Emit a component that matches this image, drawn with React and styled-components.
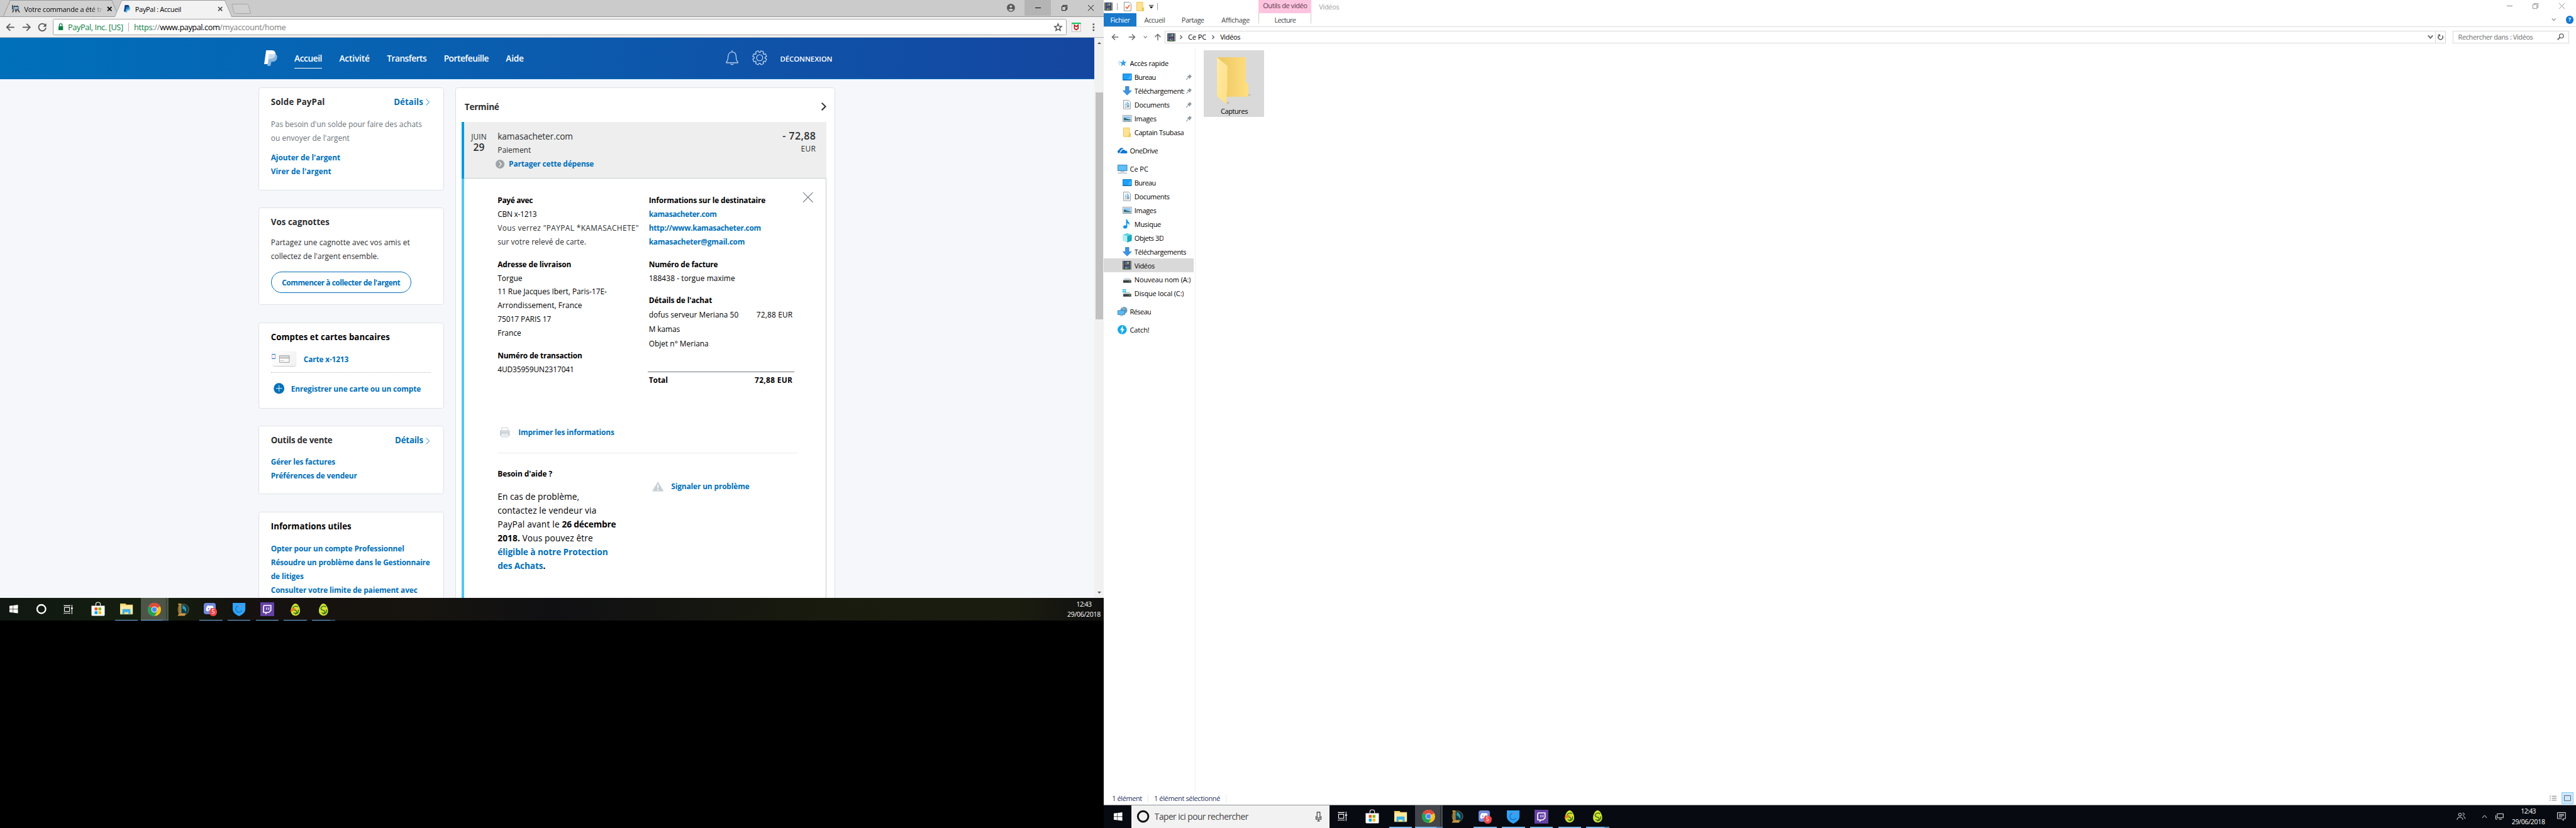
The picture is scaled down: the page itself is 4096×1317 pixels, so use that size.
import React from "react";
import styled, { createGlobalStyle, css } from "styled-components";
import { FaWindows, FaDiscord } from "react-icons/fa";

const FAMILY = '"Open Sans", "Noto Sans", sans-serif';
const SCALE = 4096 / 4480;

/* Letter spacing that brings a run of text to a given width. */
const pen = document.createElement("canvas").getContext("2d");
const tracking = (text, size, weight, width) => {
  if (!width || typeof text !== "string") return "normal";
  pen.font = `${weight} ${size}px ${FAMILY}`;
  return `${((width - pen.measureText(text).width) / text.length).toFixed(3)}px`;
};

const Global = createGlobalStyle`
  html, body { margin: 0; background: #000; overflow: hidden; }
  *, *::before, *::after { box-sizing: border-box; }
  svg { display: block; flex: none; overflow: visible; }
`;

const Desktop = styled.div`
  display: flex;
  width: 4480px;
  height: 1440px;
  zoom: ${SCALE};
  background: #000;
  font-family: ${FAMILY};
  overflow: hidden;
`;

const Text = styled.span`
  flex: none;
  white-space: pre;
  font-size: ${(p) => p.$size || 13}px;
  font-weight: ${(p) => p.$weight || 400};
  color: ${(p) => p.$color || "inherit"};
  letter-spacing: ${(p) => tracking(p.children, p.$size || 13, p.$weight || 400, p.$w)};
`;

const Line = styled(Text)`
  display: block;
  height: ${(p) => p.$h || 24}px;
  line-height: ${(p) => p.$h || 24}px;
  margin-top: ${(p) => p.$mt || 0}px;
`;

const Strong = styled(Line).attrs({ $weight: 700 })``;
const LinkLine = styled(Line).attrs({ $weight: 700, $color: "#0070ba" })``;

/* ------------------------------------------------ left monitor ---------- */

const LeftScreen = styled.div`
  flex: none;
  width: 1920px;
  height: 1080px;
  display: flex;
  flex-direction: column;
`;

const TabStrip = styled.div`
  flex: none;
  display: flex;
  height: 29px;
  padding-left: 6px;
  background: #cbcbcb;
  box-shadow: inset 0 -1px 0 #999;
`;

const Tab = styled.div`
  position: relative;
  display: flex;
  align-items: center;
  width: ${(p) => p.$width}px;
  height: 29px;
  margin-left: ${(p) => p.$overlap || 0}px;
  padding: 2px 12px 0 ${(p) => p.$pad}px;
  z-index: ${(p) => (p.$active ? 2 : 1)};
  &::before,
  &::after {
    content: "";
    position: absolute;
    z-index: -1;
    top: 0;
    bottom: ${(p) => (p.$active ? 0 : 1)}px;
    background: ${(p) => (p.$active ? "#f2f2f2" : "#d0d0d0")};
    border-top: 1px solid #999;
  }
  &::before {
    left: 0;
    right: 40%;
    border-left: 2px solid #999;
    transform: skewX(-23deg);
    transform-origin: bottom left;
  }
  &::after {
    right: 0;
    left: 40%;
    border-right: 2px solid #999;
    transform: skewX(23deg);
    transform-origin: bottom right;
  }
`;

const TabTitle = styled(Text)`
  width: ${(p) => p.$box}px;
  margin-left: ${(p) => p.$gap}px;
  overflow: hidden;
  ${(p) => p.$fade && css`mask-image: linear-gradient(90deg, #000 84%, transparent);`}
`;

const NewTab = styled.div`
  width: 29px;
  height: 17px;
  margin: 7px 0 0 1px;
  border: 2px solid #a6a6a6;
  border-radius: 3px;
  background: #d0d0d0;
  transform: skewX(16deg);
`;

const StripEnd = styled.div`
  margin-left: auto;
  display: flex;
  align-items: flex-start;
`;

const WinButton = styled.div`
  display: flex;
  align-items: center;
  justify-content: center;
  width: ${(p) => p.$width || 46}px;
  height: 27px;
  background: ${(p) => (p.$hover ? "#b4b4b4" : "transparent")};
`;

const Toolbar = styled.div`
  flex: none;
  display: flex;
  align-items: center;
  height: 37px;
  padding-left: 10px;
  background: #f2f2f2;
  border-bottom: 1px solid #b3b3b3;
`;

const NavIcons = styled.div`
  display: flex;
  gap: 12px;
  width: 82px;
`;

const UrlBox = styled.div`
  display: flex;
  align-items: center;
  width: 1763px;
  height: 29px;
  padding: 0 7px 0 9px;
  background: #fff;
  border: 1px solid #a5a5a5;
  border-radius: 3px;
`;

const UrlRule = styled.div`
  width: 1px;
  height: 16px;
  margin: 0 9px;
  background: #b5b5b5;
`;

const Spacer = styled.div`
  flex: 1;
`;

const Gap = styled.div`
  flex: none;
  width: ${(p) => p.$width}px;
`;

const ToolbarEnd = styled.div`
  display: flex;
  align-items: center;
  gap: 20px;
  margin-left: 9px;
`;

const Viewport = styled.div`
  flex: none;
  display: flex;
  height: 974px;
  overflow: hidden;
`;

const Page = styled.div`
  width: 1903px;
  height: 974px;
  overflow: hidden;
  background: #f5f7fb;
  color: #2c2e2f;
`;

const Scrollbar = styled.div`
  width: 17px;
  display: flex;
  flex-direction: column;
  align-items: center;
  background: #f1f1f1;
`;

const ScrollThumb = styled.div`
  width: 13px;
  height: 394px;
  margin: 85px 0 auto;
  background: #c1c1c1;
`;

const Arrow = styled.div`
  width: 0;
  height: 0;
  margin: ${(p) => (p.$up ? "7px 0 0" : "0 0 8px")};
  border: 4px solid transparent;
  border-${(p) => (p.$up ? "bottom" : "top")}-color: #505050;
  border-${(p) => (p.$up ? "top" : "bottom")}-width: 0;
`;

const Header = styled.div`
  display: flex;
  align-items: flex-start;
  height: 72px;
  padding: 22px 0 0 459px;
  background: linear-gradient(98deg, #0070ba 0%, #0b5bae 50%, #1546a0 100%);
  border-bottom: 1px solid #0a6dc0;
  color: #fff;
`;

const NavItem = styled(Text)`
  height: 31px;
  line-height: 28px;
  margin-left: ${(p) => p.$ml || 30}px;
  border-bottom: ${(p) => (p.$active ? "1px solid #fff" : "none")};
`;

const HeaderTools = styled.div`
  display: flex;
  align-items: flex-start;
  margin-left: 351px;
`;

const LogOut = styled(Text)`
  line-height: 30px;
  margin-left: 23px;
`;

const Columns = styled.div`
  display: flex;
  align-items: flex-start;
  gap: 20px;
  padding: 14px 0 0 450px;
`;

const SideColumn = styled.div`
  display: flex;
  flex-direction: column;
  gap: 30px;
  width: 322px;
`;

const Card = styled.div`
  height: ${(p) => p.$height}px;
  padding: ${(p) => p.$pt || 13}px 20px 0;
  background: #fff;
  border: 1px solid #dfe1e5;
  border-radius: 5px;
`;

const CardHead = styled.div`
  display: flex;
  align-items: center;
  justify-content: space-between;
  height: 24px;
  line-height: 24px;
  padding-right: 3px;
`;

const Details = styled.div`
  display: flex;
  align-items: center;
  gap: 5px;
  color: #0070ba;
`;

const PillButton = styled.div`
  display: flex;
  align-items: center;
  justify-content: center;
  width: 244px;
  height: 37px;
  margin-top: 15px;
  border: 1px solid #0070ba;
  border-radius: 19px;
  color: #0070ba;
`;

const BankRow = styled.div`
  display: flex;
  align-items: center;
  height: ${(p) => p.$h}px;
  margin-top: ${(p) => p.$mt}px;
  padding-left: ${(p) => p.$pl}px;
  gap: ${(p) => p.$gap}px;
  color: #0070ba;
`;

const MissingGlyph = styled.div`
  position: relative;
  z-index: 1;
  flex: none;
  width: 7px;
  height: 9px;
  margin-bottom: 8px;
  border: 1px solid #0070ba;
  border-left-color: #e0a0c0;
  border-right-color: #a0a0e0;
`;

const CardThumb = styled.div`
  display: flex;
  align-items: center;
  justify-content: center;
  width: 41px;
  height: 25px;
  margin: 0 13px 0 -5px;
  background: linear-gradient(120deg, #fff, #f1f1f1);
  border-radius: 4px;
  box-shadow: 0 1px 1px #c8c8c8;
`;

const DottedRule = styled.div`
  width: 278px;
  margin-top: 11px;
  border-top: 1px dotted #b4b4b4;
`;

const MainCard = styled.div`
  width: 660px;
  height: 900px;
  padding: 0 14px 0 10px;
  background: #fff;
  border: 1px solid #dfe1e5;
  border-radius: 5px;
`;

const MainHead = styled.div`
  display: flex;
  align-items: center;
  justify-content: space-between;
  height: 59px;
  padding: 5px 0 0 5px;
`;

const TxHead = styled.div`
  display: flex;
  height: 99px;
  padding-right: 18px;
  background: #eee;
  border-left: 4.4px solid #009cde;
  box-shadow: inset 0 -1px 0 #c7cdd1;
`;

const TxDate = styled.div`
  display: flex;
  flex-direction: column;
  align-items: center;
  width: 27px;
  margin: 17px 19px 0 12px;
`;

const TxInfo = styled.div`
  flex: 1;
  padding-top: 13px;
`;

const Share = styled.div`
  display: flex;
  align-items: center;
  gap: 8px;
  height: 24px;
  margin-left: -4px;
`;

const TxAmount = styled.div`
  display: flex;
  flex-direction: column;
  align-items: flex-end;
  padding-top: 13px;
`;

const TxBody = styled.div`
  height: 780px;
  padding: 26px 0 0 58px;
  border-left: 4.4px solid #54c5f8;
  border-right: 1px solid #c7cdd1;
  color: #000;
`;

const Split = styled.div`
  display: flex;
  align-items: flex-start;
  height: ${(p) => p.$height}px;
`;

const LeftCell = styled.div`
  flex: none;
  width: 261px;
`;

const RightCell = styled.div`
  flex: none;
  width: 255px;
`;

const Inset = styled.div`
  padding-left: 2px;
`;

const PriceRow = styled.div`
  display: flex;
  justify-content: space-between;
  padding: 0 3px 0 2px;
  ${(p) => p.$total && css`
    margin-top: 37px;
    padding-top: 2px;
    border-top: 1px solid #6f767a;
  `}
`;

const CloseSlot = styled.div`
  margin: -2px 0 0 15px;
`;

const IconLink = styled.div`
  display: flex;
  align-items: center;
  gap: ${(p) => p.$gap}px;
  height: 24px;
  margin-top: ${(p) => p.$mt || 0}px;
  padding-left: ${(p) => p.$pl || 0}px;
`;

const Rule = styled.div`
  width: 522px;
  height: 1px;
  margin: 24px 0;
  background: #e9ebec;
`;

const Run = styled.div`
  display: flex;
  height: 24px;
  line-height: 24px;
`;

/* ------------------------------------------------ icons ----------------- */

const PayPalMark = ({ width, height, back, front }) => (
  <svg width={width} height={height} viewBox="0 0 23 27">
    <path d="M3.5 0H13c5 0 7.6 3 6.700 7.500C18.700 13 15 15 10.500 15H8l-1.500 9H0z" fill={back} />
    <path d="M8.500 6.500H19.500c3 1.200 3.800 4 3 7C21.500 18 18.500 20 15 20h-2.500L11 27H5.500z" fill={front} opacity="0.75" />
  </svg>
);

const Chevron = ({ w = 7, h = 12, color = "#0070ba", sw = 1 }) => (
  <svg width={w} height={h} viewBox="0 0 7 12" preserveAspectRatio="none">
    <path d="M.6.6 6.300 6 .6 11.400" fill="none" stroke={color} strokeWidth={sw} vectorEffect="non-scaling-stroke" />
  </svg>
);

const Cross = ({ size, color, sw }) => (
  <svg width={size} height={size} viewBox="0 0 10 10">
    <path d="M0 0 10 10M10 0 0 10" stroke={color} strokeWidth={sw} vectorEffect="non-scaling-stroke" />
  </svg>
);

const Restore = ({ color }) => (
  <svg width="10" height="10" viewBox="0 0 10 10" fill="none" stroke={color}>
    <path d="M.5 2.500h7v7h-7zM2.500 2.500v-2h7v7h-2" />
  </svg>
);

const BackArrow = ({ color = "#5a5a5a", flip, sw = 2, size = 16 }) => (
  <svg width={size} height={size} viewBox="0 0 16 16" fill="none" stroke={color} strokeWidth={sw}>
    <path d="M15 8H2M8 2 2 8l6 6" transform={flip ? `rotate(${flip} 8 8)` : undefined} />
  </svg>
);

const Reload = () => (
  <svg width="16" height="16" viewBox="0 0 16 16">
    <path d="M13 4.200A6.300 6.300 0 1 0 14.200 9" fill="none" stroke="#5a5a5a" strokeWidth="2" />
    <path d="M15 1v6H9z" fill="#5a5a5a" />
  </svg>
);

const Lock = () => (
  <svg width="8" height="12" viewBox="0 0 8 12">
    <path d="M0 5h8v7H0z" fill="#0b8043" />
    <path d="M1.700 5V3a2.300 2.300 0 0 1 4.600 0v2" fill="none" stroke="#0b8043" strokeWidth="1.400" />
  </svg>
);

const Bell = () => (
  <svg width="22" height="26" viewBox="0 0 22 26" fill="none" stroke="#d3e2f5" strokeWidth="1.200">
    <path d="M11 0v3M1 20.500c2.500-2.500 3-4 3-9C4 6 7 3 11 3s7 3 7 8.500c0 5 .5 6.500 3 9v1.200H1zM8.500 23.500a2.600 2 0 0 0 5 0" />
  </svg>
);

const gearPath = (() => {
  const steps = [];
  for (let i = 0; i < 8; i += 1) {
    [[-0.2, 12.300], [0.2, 12.300], [0.3, 9.400], [0.485, 9.400]].forEach(([d, r]) => {
      const a = (i * Math.PI) / 4 + Math.PI / 8 + d;
      steps.push(`${(13 + Math.sin(a) * r).toFixed(2)} ${(13 - Math.cos(a) * r).toFixed(2)}`);
    });
  }
  return `M${steps.join("L")}Z`;
})();

const Gear = () => (
  <svg width="26" height="26" viewBox="0 0 26 26" fill="none" stroke="#d3e2f5" strokeWidth="1.200" strokeLinejoin="round">
    <path d={gearPath} />
    <circle cx="13" cy="13" r="5.300" />
  </svg>
);

const CreditCard = () => (
  <svg width="18" height="13" viewBox="0 0 18 13" fill="none" stroke="#9a9a9a">
    <path d="M.5.5h17v12H.5zM0 3h18M0 5h18" />
    <path d="M2 9.500h6" strokeDasharray="1.500 1" />
  </svg>
);

const PlusDisc = () => (
  <svg width="19" height="20" viewBox="0 0 19 20">
    <circle cx="9.500" cy="10.500" r="9.200" fill="#b9c6d2" />
    <circle cx="9.500" cy="9.500" r="9.200" fill="#0070ba" />
    <path d="M9.500 4v11M4 9.500h11" stroke="#fff" />
  </svg>
);

const ShareDisc = () => (
  <svg width="15.500" height="15.500" viewBox="0 0 16 16">
    <circle cx="8" cy="8" r="8" fill="#9da3a6" />
    <path d="M6.300 3.500 10.500 8l-4.200 4.500" fill="none" stroke="#fff" strokeWidth="1.200" />
  </svg>
);

const Printer = () => (
  <svg width="17" height="17" viewBox="0 0 17 17">
    <path d="M3 .5h11V6H3z" fill="#fff" stroke="#c7cfd4" />
    <path d="M0 5h17v9.500h-2.500V10h-12v4.500H0z" fill="#c7cfd4" />
    <path d="M3 10h11v6.500H3zM5 12h7M5 14.200h7" fill="none" stroke="#c7cfd4" />
    <path d="M1.500 7.500h14" stroke="#fff" strokeWidth=".6" />
  </svg>
);

const Warning = () => (
  <svg width="20" height="17" viewBox="0 0 20 17">
    <path d="M10 0 20 17H0z" fill="#c7cfd4" />
    <path d="M10 5v6.500M10 13.200v2" stroke="#fff" strokeWidth="2" />
  </svg>
);

const Film = ({ s = 15 }) => (
  <svg width={s} height={s} viewBox="0 0 15 15">
    <path d="M0 0h15v15H0z" fill="#3c3c40" />
    <path d="M1.500 1v14M13.500 1v14" stroke="#e2e2e2" strokeWidth="1.200" strokeDasharray="1.200 1" />
    <path d="M3.500 1h8v6h-8z" fill="#3767b8" />
    <path d="M3.500 8.500h8V14h-8z" fill="#2e5cae" />
    <path d="M8 2h3v2H8zM5 11h2v2H5z" fill="#f2c230" />
    <path d="M4 5h4v1.500H4zM8 9.500h3V11H8z" fill="#d84a3a" />
    <path d="M7 4.500h4V6H7zM4 12.500h7V14H4z" fill="#4f9e3f" />
  </svg>
);

const CheckDoc = () => (
  <svg width="13" height="16" viewBox="0 0 13 16">
    <path d="M.5.500h9l3 3v12H.5z" fill="#fff" stroke="#868686" />
    <path d="m3 8.500 2.500 3 4.500-6" fill="none" stroke="#f0642a" strokeWidth="1.800" />
  </svg>
);

const SmallFolder = () => (
  <svg width="13" height="16" viewBox="0 0 13 16">
    <path d="M.5.500H11V9l1.500 1.500v5H.5z" fill="#ffe394" stroke="#e9c04e" />
    <path d="M10 10.500h2.500v5H10z" fill="#f8d067" stroke="#e2b53d" strokeWidth=".7" />
  </svg>
);

const Monitor = () => (
  <svg width="16" height="12" viewBox="0 0 16 12">
    <path d="M.5.500h15v11H.5z" fill="#1ba1fb" stroke="#1170b4" />
    <path d="M8 11 15 1v10z" fill="#43b4ff" />
    <path d="M1 11h14" stroke="#0b62a5" />
  </svg>
);

const DownArrow = () => (
  <svg width="16" height="16" viewBox="0 0 16 16">
    <path d="M5 .5h6V8h4.500L8 15.500.5 8H5z" fill="#3a94e4" stroke="#2a76c2" strokeWidth=".8" />
  </svg>
);

const DocIcon = () => (
  <svg width="13" height="16" viewBox="0 0 13 16">
    <path d="M.5.500h9l3 3v12H.5z" fill="#fff" stroke="#8a8f94" />
    <path d="M3 5.500h2M6 4h3M6 6h4M2.500 8h8" stroke="#2f96d8" />
    <path d="M2.500 10.500h3M2.500 12.500h8" stroke="#8a9aa8" />
    <path d="M6.500 9.500h4v2h-4z" fill="#4d7f8e" />
  </svg>
);

const ImageIcon = () => (
  <svg width="16" height="12" viewBox="0 0 16 12">
    <path d="M.5.500h15v11H.5z" fill="#fff" stroke="#8a8f94" />
    <path d="M2 2h12v4H2z" fill="#8fc4f2" />
    <path d="M2 5c4 0 5 2.500 12 2v3H2z" fill="#2d6672" />
    <path d="M2 8.500h12V10H2z" fill="#6fa5c9" />
  </svg>
);

const StarIcon = () => (
  <svg width="15" height="14" viewBox="0 0 16 14">
    <path d="m9.500 0 1.500 4.600 4.800.2-3.800 3 1.400 4.800-4-2.700L5.200 13l1.500-4.800L3 5h4.700z" fill="#2f9be6" />
    <path d="M1 4h3M0 7h3M1.500 10H4" stroke="#56b4f0" />
  </svg>
);

const Cloud = () => (
  <svg width="17" height="11" viewBox="0 0 17 11">
    <path d="M0 8c0-2 1.500-3 2.800-3C3.200 1.500 8 .2 10.500 3 7 3 5 5 5 7.500c-1.500.5-1.700 2-1 3C1.500 11 0 9.800 0 8z" fill="#0f72c6" />
    <path d="M5 11c-1-1.500 0-3 1.500-3C6.500 4.500 11 3 13 6c2.500-.3 4 1.200 4 3 0 1.200-.8 2-2 2z" fill="#1079d8" />
  </svg>
);

const Computer = () => (
  <svg width="17" height="15" viewBox="0 0 17 15">
    <path d="M.5.500h16v10H.5z" fill="#5fbdf8" stroke="#2a7cb5" />
    <path d="M5 12h7M.5 14.500h16" stroke="#8697a3" />
  </svg>
);

const Note = () => (
  <svg width="12" height="16" viewBox="0 0 12 16">
    <ellipse cx="3.500" cy="13" rx="3.500" ry="2.800" fill="#1296ec" />
    <path d="M5 0h2c0 4 5 4.500 4 10.500C10.500 8 9 7 7 6.500V13H5z" fill="#1296ec" />
  </svg>
);

const Cube = () => (
  <svg width="16" height="16" viewBox="0 0 16 16">
    <path d="M8 0 16 2.500 8 5 0 2.500z" fill="#58d5e0" />
    <path d="M0 2.500 8 5v11l-8-3z" fill="#b4eef0" />
    <path d="m16 2.500-8 2.500v11l8-3z" fill="#19a8bf" />
  </svg>
);

const Drive = ({ win }) => (
  <svg width="16" height="15" viewBox="0 0 16 15">
    <path d="M3 6h10l2 4H1z" fill="#cfd3d6" />
    <path d="M1 9.500h14V14H1z" fill="#3d4144" />
    <path d="M11 11.500h2" stroke="#3fd34a" strokeWidth="1.500" />
    {win && <path d="M0 1h2.500v2.500H0zM3.300 1h2.500v2.500H3.300zM0 4.300h2.500v2.500H0zM3.300 4.300h2.500v2.500H3.300z" fill="#19b5ee" />}
  </svg>
);

const NetworkIcon = () => (
  <svg width="17" height="16" viewBox="0 0 17 16">
    <circle cx="11" cy="6" r="6" fill="#6a9db9" />
    <path d="M8 1.500c3 1 4 4 3 7" stroke="#cfe5ef" fill="none" />
    <path d="M.5 6.500h12v7H.5z" fill="#5cbcf8" stroke="#2a7cb5" />
    <path d="M4 15.500h6" stroke="#8697a3" />
  </svg>
);

const CatchIcon = () => (
  <svg width="16" height="16" viewBox="0 0 16 16">
    <circle cx="8" cy="8" r="8" fill="#16aaea" />
    <path d="M9 1 4.500 9h3L6.500 15 12 7H9z" fill="#fff" />
  </svg>
);

const Pin = () => (
  <svg width="10" height="10" viewBox="0 0 10 10">
    <path d="M6 0 10 4 8.500 4.500 7 6.500 6.800 8.500 1.500 3.500 3.800 3.200 5.500 1.500z" fill="#8996a0" />
    <path d="M3.500 6.500.3 9.700" stroke="#8996a0" strokeWidth="1.200" />
  </svg>
);

const BigFolder = () => (
  <svg width="60" height="83" viewBox="0 0 60 83">
    <defs>
      <linearGradient id="fback" x1="0" x2="1">
        <stop offset="0" stopColor="#ebc55f" />
        <stop offset="1" stopColor="#ffdf80" />
      </linearGradient>
      <linearGradient id="ffront" x1="0" x2="1" y1="0" y2="1">
        <stop offset="0" stopColor="#ffe9a6" />
        <stop offset="1" stopColor="#fddf85" />
      </linearGradient>
    </defs>
    <path d="m17 82 6-3-6-2zM54 68l6-3-6-1z" fill="#bdbdbd" />
    <path d="M0 0h50v43l4.500 4v22H0z" fill="url(#fback)" />
    <path d="m0 0 18 15v43l-1 3v21L0 68z" fill="url(#ffront)" />
  </svg>
);

const TaskView = () => (
  <svg width="16" height="16" viewBox="0 0 16 16" fill="none" stroke="#fff" strokeWidth="1.200">
    <path d="M.5 4.500h9v7h-9zM0 .5v1h10v-1M0 15.500v-1h10v1M13.500 0v4M13.500 8v8" />
    <path d="M12 4.500h3v3h-3z" fill="#fff" stroke="none" />
  </svg>
);

const Ring = ({ s, sw, color }) => (
  <svg width={s} height={s} viewBox="0 0 20 20">
    <circle cx="10" cy="10" r="8.700" fill="none" stroke={color} strokeWidth={sw} />
  </svg>
);

const Store = () => (
  <svg width="24" height="24" viewBox="0 0 24 24">
    <path d="M8 6V3.500a4 3.500 0 0 1 8 0V6" fill="none" stroke="#fff" strokeWidth="1.200" />
    <path d="M.5 6h23v16a1.500 1.500 0 0 1-1.500 1.500H2A1.500 1.500 0 0 1 .5 22z" fill="#fff" />
    <path d="M6 9h5v5H6z" fill="#f25022" />
    <path d="M12.500 9h5v5h-5z" fill="#7fba00" />
    <path d="M6 15.500h5v5H6z" fill="#00a4ef" />
    <path d="M12.500 15.500h5v5h-5z" fill="#ffb900" />
  </svg>
);

const ExplorerIcon = () => (
  <svg width="22" height="19" viewBox="0 0 22 19">
    <path d="M0 0h9l2 2h11v17H0z" fill="#fbd56b" />
    <path d="M0 3.500h22V17H0z" fill="#ffe9a0" />
    <path d="M4 19v-8a1.500 1.500 0 0 1 1.500-1.500h11A1.500 1.500 0 0 1 18 11v8h-3.500v-4h-7v4z" fill="#3db4e8" />
  </svg>
);

const ChromeIcon = () => (
  <svg width="23" height="23" viewBox="0 0 24 24">
    <circle cx="12" cy="12" r="12" fill="#fbc116" />
    <path d="M12 12 1.600 6A12 12 0 0 1 22.400 6z" fill="#de4b3d" />
    <path d="M1.600 6A12 12 0 0 0 12 24l5-9-5-3z" fill="#1fa15d" />
    <path d="M12 6.500h10.700a12 12 0 0 0-.3-.5H12z" fill="#de4b3d" />
    <circle cx="12" cy="12" r="5.500" fill="#f4f4f4" />
    <circle cx="12" cy="12" r="4.300" fill="#4a8af4" />
  </svg>
);

const LeagueIcon = () => (
  <svg width="21" height="23" viewBox="0 0 21 23">
    <circle cx="11.500" cy="11.500" r="9.500" fill="#0c3a4d" stroke="#8d7238" />
    <path d="M10 4c5 1 8 6 6 12-2-4-3-5-6-6z" fill="#2f9aa8" />
    <path d="M2 1h6v17h8l-2 4.500H1.500L3.500 19.500V3.500z" fill="#c89a43" />
    <path d="M5 3h1.300v16.500H5z" fill="#7a5620" />
  </svg>
);

const DiscordBox = styled.div`
  position: relative;
  display: flex;
  align-items: center;
  justify-content: center;
  width: 20px;
  height: 20px;
  margin: -2px 0 0 -4px;
  border-radius: 4px;
  background: #7289da;
`;

const Badge = styled.div`
  position: absolute;
  left: 9px;
  top: 9px;
  width: 14px;
  height: 14px;
  border-radius: 50%;
  background: #f04747;
  color: #fff;
  font-size: 10px;
  line-height: 14px;
  text-align: center;
`;

const ShieldIcon = () => (
  <svg width="22" height="24" viewBox="0 0 22 24">
    <path d="M0 1h22V12c0 6-6 10-11 12C6 22 0 18 0 12z" fill="#2ea3f7" />
    <path d="M15 8a5.600 5.600 0 1 0 1 6" fill="none" stroke="#1b6fbd" strokeWidth="1.400" />
    <path d="M15 8a5.600 5.600 0 0 0-5.500-1.500" fill="none" stroke="#e68aa0" strokeWidth="1.200" />
  </svg>
);

const TwitchIcon = () => (
  <svg width="24" height="24" viewBox="0 0 24 24">
    <path d="M0 0h24v24H0z" fill="#6441a4" />
    <path d="M6.300 5.500h12V14l-3.500 3.500h-3L9.500 19.500v-2H5.500V8z" fill="none" stroke="#fff" strokeWidth="1.800" />
    <path d="M11 9v4M14.700 9v4" stroke="#fff" strokeWidth="1.400" />
  </svg>
);

const EggIcon = ({ beak }) => (
  <svg width={beak ? 17 : 16} height="21" viewBox="0 0 16 21">
    <path d="M8 0c4 0 8 7 8 12.500S12 21 8 21s-8-3-8-8.500S4 0 8 0z" fill="#d2e335" />
    <path d="M12.500 6C9 3.500 3.500 5 3.700 9c.2 3.500 7 2 7 5.500 0 3-4.500 3.200-6 1M13 10.500c1.500 4-1 8-6 7.800" fill="none" stroke="#3f7212" strokeWidth="1.700" />
    {beak && <path d="M-1 14c1-6 5-7.500 10-5-2 2-4 5-10 5z" fill="#f07a1c" />}
  </svg>
);

/* ------------------------------------------------ taskbar --------------- */

const TaskbarBox = styled.div`
  flex: none;
  display: flex;
  align-items: stretch;
  height: 40px;
  background: ${(p) => p.$bg};
  border-top: ${(p) => (p.$line ? "1px solid #8f9193" : "none")};
  color: #fff;
`;

const TaskButton = styled.div`
  position: relative;
  flex: none;
  display: flex;
  align-items: center;
  justify-content: center;
  width: ${(p) => p.$width || 48}px;
  margin-right: ${(p) => p.$gap || 0}px;
  background: ${(p) => (p.$focus ? "linear-gradient(90deg, rgba(255,255,255,.24) 44px, rgba(255,255,255,.1) 44px, rgba(255,255,255,.1) 45px, rgba(255,255,255,.24) 45px)" : "none")};
  &::after {
    content: "";
    display: ${(p) => (p.$running ? "block" : "none")};
    position: absolute;
    bottom: 0;
    left: ${(p) => (p.$focus ? 0 : 4)}px;
    right: ${(p) => (p.$focus ? 0 : 4)}px;
    height: 2px;
    background: ${(p) => (p.$stack ? "linear-gradient(90deg, #76b9ed 78%, #4f81a8 78%)" : "#76b9ed")};
  }
`;

const AppRow = styled.div`
  display: flex;
  margin-left: ${(p) => p.$ml}px;
`;

const Clock = styled.div`
  display: flex;
  flex-direction: column;
  align-items: center;
  justify-content: center;
  width: 58px;
  margin-right: ${(p) => p.$mr}px;
`;

const DiscordIcon = () => (
  <DiscordBox>
    <FaDiscord size={15} color="#fff" />
    <Badge>5</Badge>
  </DiscordBox>
);

const APPS = [
  { id: "store", icon: <Store /> },
  { id: "explorer", icon: <ExplorerIcon />, running: true },
  { id: "chrome", icon: <ChromeIcon />, running: true, focus: true, stack: true },
  { id: "league", icon: <LeagueIcon /> },
  { id: "discord", icon: <DiscordIcon />, running: true },
  { id: "shield", icon: <ShieldIcon />, running: true },
  { id: "twitch", icon: <TwitchIcon />, running: true },
  { id: "egg1", icon: <EggIcon beak />, running: true },
  { id: "egg2", icon: <EggIcon />, running: true, stack: true },
];

const Apps = ({ ml }) => (
  <AppRow $ml={ml}>
    {APPS.map((a) => (
      <TaskButton key={a.id} $gap={1} $running={a.running} $focus={a.focus} $stack={a.stack}>
        {a.icon}
      </TaskButton>
    ))}
  </AppRow>
);

const ClockText = ({ mr }) => (
  <Clock $mr={mr}>
    <Line $size={11.5} $w={26} $h={18}>12:43</Line>
    <Line $size={11.5} $w={58} $h={18}>29/06/2018</Line>
  </Clock>
);

/* ------------------------------------------------ right monitor --------- */

const RightScreen = styled.div`
  width: 2560px;
  height: 1440px;
  display: flex;
  flex-direction: column;
  background: #fff;
  color: #000;
`;

const TitleBar = styled.div`
  flex: none;
  display: flex;
  height: 23px;
  padding-left: 1px;
`;

const QuickAccess = styled.div`
  display: flex;
  align-items: center;
  width: 268px;
  height: 23px;
`;

const QuickSlot = styled.div`
  margin-left: ${(p) => p.$ml || 0}px;
`;

const QuickRule = styled.div`
  width: 1px;
  height: 12px;
  margin-left: ${(p) => p.$ml}px;
  background: #9a9a9a;
`;

const ContextTab = styled.div`
  display: flex;
  justify-content: center;
  width: 92px;
  height: 23px;
  background: #fdc4df;
  line-height: 20px;
`;

const WindowTitle = styled(Text)`
  margin-left: 13px;
  line-height: 24px;
`;

const Caption = styled.div`
  display: flex;
  margin: 5px 20px 0 auto;
  gap: 35px;
`;

const MinMark = styled.div`
  width: 10px;
  height: 1px;
  margin-top: ${(p) => p.$mt || 0}px;
  background: ${(p) => p.$color};
`;

const RibbonTabs = styled.div`
  flex: none;
  display: flex;
  height: 24px;
  border-bottom: 1px solid #dadbdc;
  line-height: 23px;
  color: #444;
`;

const RibbonTab = styled.div`
  display: flex;
  justify-content: center;
  width: ${(p) => p.$width}px;
  background: ${(p) => (p.$file ? "#1979ca" : "none")};
  color: ${(p) => (p.$file ? "#fff" : "#444")};
  ${(p) => p.$context && css`
    border: solid transparent;
    border-width: 0 1px;
    border-image: linear-gradient(#ccc 60%, #e6e6e6 80%, transparent 82%) 1;
  `}
`;

const RibbonEnd = styled.div`
  display: flex;
  align-items: center;
  gap: 17px;
  margin: 0 4px 0 auto;
`;

const HelpDisc = styled.div`
  width: 14px;
  height: 14px;
  border-radius: 50%;
  background: #0f78d4;
  color: #fff;
  font-size: 10px;
  font-weight: 700;
  line-height: 14px;
  text-align: center;
`;

const AddressRow = styled.div`
  flex: none;
  display: flex;
  align-items: center;
  height: 35px;
  padding: 0 12px 0 13px;
`;

const AddressNav = styled.div`
  flex: none;
  display: flex;
  align-items: center;
  width: 93px;
`;

const AddressBox = styled.div`
  flex: none;
  display: flex;
  align-items: center;
  width: 2228px;
  height: 22px;
  padding-left: 3px;
  border: 1px solid #d9d9d9;
`;

const Crumb = styled(Text)`
  margin: 0 10px;
`;

const RefreshCell = styled.div`
  display: flex;
  align-items: center;
  justify-content: center;
  width: 18px;
  height: 20px;
  margin-left: 3px;
  border-left: 1px solid #d9d9d9;
`;

const SearchBox = styled.div`
  display: flex;
  align-items: center;
  justify-content: space-between;
  width: 202px;
  height: 22px;
  margin-left: 12px;
  padding: 0 8px;
  border: 1px solid #d9d9d9;
  color: #6d6d6d;
`;

const ExplorerBody = styled.div`
  flex: 1;
  display: flex;
  min-height: 0;
`;

const NavPane = styled.div`
  width: 159px;
  padding-top: 16px;
  border-right: 1px solid #f0f0f0;
`;

const NavRow = styled.div`
  display: flex;
  align-items: center;
  width: 156px;
  height: 24px;
  margin-top: ${(p) => (p.$section ? 8 : 0)}px;
  padding-left: ${(p) => (p.$child ? 31 : 23)}px;
  background: ${(p) => (p.$selected ? "#d9d9d9" : "none")};
`;

const NavIcon = styled.div`
  flex: none;
  display: flex;
  align-items: center;
  justify-content: center;
  width: 18px;
  margin-right: 4px;
`;

const NavLabel = styled(Text)`
  max-width: ${(p) => (p.$clip ? 87 : 110)}px;
  overflow: hidden;
`;

const PinSlot = styled.div`
  margin: 0 3px 0 auto;
`;

const FolderTile = styled.div`
  display: flex;
  flex-direction: column;
  align-items: center;
  width: 105px;
  height: 116px;
  margin: 6px 0 0 15px;
  padding-top: 12px;
  background: #d9d9d9;
`;

const StatusBar = styled.div`
  flex: none;
  display: flex;
  align-items: center;
  height: 23px;
  padding: 0 4px 0 14px;
  color: #26335f;
`;

const StatusRule = styled.div`
  width: 1px;
  height: 14px;
  margin: 0 10px;
  background: #e8e8e8;
`;

const ViewIcons = styled.div`
  display: flex;
  align-items: center;
  gap: 4px;
  margin-left: auto;
`;

const ViewButton = styled.div`
  display: flex;
  align-items: center;
  justify-content: center;
  width: 21px;
  height: 21px;
  background: ${(p) => (p.$on ? "#cce8ff" : "none")};
  border: 1px solid ${(p) => (p.$on ? "#8ccbf5" : "transparent")};
`;

const TaskSearch = styled.div`
  display: flex;
  align-items: center;
  width: 344px;
  padding: 0 14px 0 9px;
  background: #f2f2f2;
  color: #444;
`;

const SearchHint = styled(Text)`
  margin: 0 auto 0 10px;
`;

const Tray = styled.div`
  display: flex;
  align-items: center;
  gap: 14px;
  margin: 0 18px 0 auto;
`;

const NAV = [
  { icon: <StarIcon />, label: "Accès rapide", w: 67 },
  { icon: <Monitor />, label: "Bureau", w: 37, child: true, pin: true },
  { icon: <DownArrow />, label: "Téléchargements", w: 90, child: true, pin: true },
  { icon: <DocIcon />, label: "Documents", w: 61, child: true, pin: true },
  { icon: <ImageIcon />, label: "Images", w: 38, child: true, pin: true },
  { icon: <SmallFolder />, label: "Captain Tsubasa", w: 86, child: true },
  { icon: <Cloud />, label: "OneDrive", w: 49, section: true },
  { icon: <Computer />, label: "Ce PC", w: 32, section: true },
  { icon: <Monitor />, label: "Bureau", w: 37, child: true },
  { icon: <DocIcon />, label: "Documents", w: 61, child: true },
  { icon: <ImageIcon />, label: "Images", w: 38, child: true },
  { icon: <Note />, label: "Musique", w: 46, child: true },
  { icon: <Cube />, label: "Objets 3D", w: 51, child: true },
  { icon: <DownArrow />, label: "Téléchargements", w: 90, child: true },
  { icon: <Film />, label: "Vidéos", w: 35, child: true, selected: true },
  { icon: <Drive />, label: "Nouveau nom (A:)", w: 98, child: true },
  { icon: <Drive win />, label: "Disque local (C:)", w: 86, child: true },
  { icon: <NetworkIcon />, label: "Réseau", w: 37, section: true },
  { icon: <CatchIcon />, label: "Catch!", w: 34, section: true },
];

/* ------------------------------------------------ composition ----------- */

const Browser = () => (
  <>
    <TabStrip>
      <Tab $width={200} $pad={15}>
        <svg width="14" height="15" viewBox="0 0 14 15">
          <path d="M2 3h10v5H2z" fill="#3d6f9e" />
          <path d="M1 1v8M5 2v4M9 2v4M3 9l-2 5M10 8l3 6M5 10h5M7 9v5" stroke="#222" strokeWidth="1.500" />
          <path d="M3 6h8" stroke="#fff" strokeWidth="1.500" />
        </svg>
        <TabTitle $size={12} $gap={7} $box={138} $fade $w={136}>Votre commande a été tr</TabTitle>
        <Spacer />
        <Cross size={7} color="#111" sw={2} />
      </Tab>
      <Tab $width={205} $overlap={-7} $pad={16} $active>
        <PayPalMark width={11} height={13} back="#123a86" front="#1f9bdd" />
        <TabTitle $size={12} $gap={9} $box={84} $w={80}>PayPal : Accueil</TabTitle>
        <Spacer />
        <Cross size={7} color="#444" sw={1.6} />
        <Gap $width={6} />
      </Tab>
      <NewTab />
      <StripEnd>
        <WinButton $width={48}>
          <svg width="14" height="14" viewBox="0 0 14 14">
            <circle cx="7" cy="7" r="7" fill="#5a5a5a" />
            <circle cx="7" cy="4.700" r="2.100" fill="#cbcbcb" />
            <path d="M2.800 10.500c1-2.500 7.400-2.500 8.400 0-2 2.600-6.400 2.600-8.400 0z" fill="#cbcbcb" />
          </svg>
        </WinButton>
        <WinButton $hover><MinMark $color="#000" /></WinButton>
        <WinButton><Restore color="#000" /></WinButton>
        <WinButton><Cross size={10} color="#000" sw={1} /></WinButton>
      </StripEnd>
    </TabStrip>
    <Toolbar>
      <NavIcons><BackArrow /><BackArrow flip="180" /><Reload /></NavIcons>
      <UrlBox>
        <Lock />
        <Gap $width={8} />
        <Text $size={14} $w={96} $color="#0b8043">PayPal, Inc. [US]</Text>
        <UrlRule />
        <Text $size={14} $w={32} $color="#0b8043">https</Text>
        <Text $size={14} $w={13} $color="#808080">://</Text>
        <Text $size={14} $w={104} $color="#000">www.paypal.com</Text>
        <Text $size={14} $w={115} $color="#808080">/myaccount/home</Text>
        <Spacer />
        <svg width="14" height="14" viewBox="0 0 14 14">
          <path d="m7 1 1.700 4.100 4.500.4-3.400 2.900 1 4.300L7 10.400l-3.800 2.300 1-4.300L.8 5.500l4.500-.4z" fill="none" stroke="#4a4a4a" strokeWidth="1.500" />
        </svg>
      </UrlBox>
      <ToolbarEnd>
        <svg width="16" height="16" viewBox="0 0 16 16">
          <path d="M.5.500h15v15H.5z" fill="#fff" stroke="#b5b5b5" />
          <path d="M0 0h16v2.500H0z" fill="#19c564" />
          <path d="M4.800 4.500v6L8 12.500l3.200-2v-6L8 6.800z" fill="none" stroke="#c01818" strokeWidth="2" />
        </svg>
        <svg width="4" height="14" viewBox="0 0 4 14" fill="#5a5a5a">
          <circle cx="2" cy="2" r="1.600" /><circle cx="2" cy="7" r="1.600" /><circle cx="2" cy="12" r="1.600" />
        </svg>
      </ToolbarEnd>
    </Toolbar>
  </>
);

const DetailsLink = ({ w }) => (
  <Details>
    <Text $size={14.5} $weight={700} $w={w}>Détails</Text>
    <Chevron />
  </Details>
);

const Sidebar = () => (
  <SideColumn>
    <Card $height={179}>
      <CardHead>
        <Text $size={14.5} $weight={700} $w={94}>Solde PayPal</Text>
        <DetailsLink w={51} />
      </CardHead>
      <Line $mt={15} $color="#6c7378" $w={263}>Pas besoin d'un solde pour faire des achats</Line>
      <Line $color="#6c7378" $w={137}>ou envoyer de l'argent</Line>
      <LinkLine $mt={10} $w={121}>Ajouter de l'argent</LinkLine>
      <LinkLine $w={105}>Virer de l'argent</LinkLine>
    </Card>
    <Card $height={170}>
      <Line $size={14.5} $weight={700} $w={102}>Vos cagnottes</Line>
      <Line $mt={11} $w={242}>Partagez une cagnotte avec vos amis et</Line>
      <Line $w={188}>collectez de l'argent ensemble.</Line>
      <PillButton><Text $weight={700} $w={206}>Commencer à collecter de l'argent</Text></PillButton>
    </Card>
    <Card $height={150}>
      <Line $size={14.5} $weight={700} $color="#000" $w={207}>Comptes et cartes bancaires</Line>
      <BankRow $h={26} $mt={12} $pl={1} $gap={0}>
        <MissingGlyph />
        <CardThumb><CreditCard /></CardThumb>
        <Text $weight={700} $w={78}>Carte x-1213</Text>
      </BankRow>
      <DottedRule />
      <BankRow $h={24} $mt={15} $pl={5} $gap={11}>
        <PlusDisc />
        <Text $weight={700} $w={226}>Enregistrer une carte ou un compte</Text>
      </BankRow>
    </Card>
    <Card $height={119} $pt={13}>
      <CardHead>
        <Text $size={14.5} $weight={700} $w={107}>Outils de vente</Text>
        <DetailsLink w={49} />
      </CardHead>
      <LinkLine $mt={13} $w={112}>Gérer les factures</LinkLine>
      <LinkLine $w={150}>Préférences de vendeur</LinkLine>
    </Card>
    <Card $height={200} $pt={13}>
      <Line $size={14.5} $weight={700} $color="#000" $w={140}>Informations utiles</Line>
      <LinkLine $mt={15} $w={232}>Opter pour un compte Professionnel</LinkLine>
      <LinkLine $w={277}>Résoudre un problème dans le Gestionnaire</LinkLine>
      <LinkLine $w={57}>de litiges</LinkLine>
      <LinkLine $w={255}>Consulter votre limite de paiement avec</LinkLine>
    </Card>
  </SideColumn>
);

const Transaction = () => (
  <MainCard>
    <MainHead>
      <Text $size={15} $weight={700} $w={60}>Terminé</Text>
      <Chevron w={8} h={14} color="#2c2e2f" sw={2.2} />
    </MainHead>
    <TxHead>
      <TxDate>
        <Line $size={13} $h={18} $w={27}>JUIN</Line>
        <Line $size={17} $weight={600} $h={18} $w={20}>29</Line>
      </TxDate>
      <TxInfo>
        <Line $size={15} $w={131}>kamasacheter.com</Line>
        <Line $w={58}>Paiement</Line>
        <Share><ShareDisc /><LinkLine $w={148}>Partager cette dépense</LinkLine></Share>
      </TxInfo>
      <TxAmount>
        <Line $size={17.5} $weight={600} $h={22} $w={58}>- 72,88</Line>
        <Line $h={22} $w={26}>EUR</Line>
      </TxAmount>
    </TxHead>
    <TxBody>
      <Split $height={403}>
        <LeftCell>
          <Strong $w={61}>Payé avec</Strong>
          <Line $w={68}>CBN x-1213</Line>
          <Line $color="#2c2e2f" $w={246}>Vous verrez "PAYPAL *KAMASACHETE"</Line>
          <Line $color="#2c2e2f" $w={154}>sur votre relevé de carte.</Line>
          <Strong $mt={15} $w={128}>Adresse de livraison</Strong>
          <Line $w={43}>Torgue</Line>
          <Line $w={190}>11 Rue Jacques Ibert, Paris-17E-</Line>
          <Line $w={147}>Arrondissement, France</Line>
          <Line $w={93}>75017 PARIS 17</Line>
          <Line $w={41}>France</Line>
          <Strong $mt={15} $w={147}>Numéro de transaction</Strong>
          <Line $w={133}>4UD35959UN2317041</Line>
        </LeftCell>
        <RightCell>
          <Inset>
            <Strong $w={203}>Informations sur le destinataire</Strong>
            <LinkLine $w={118}>kamasacheter.com</LinkLine>
            <LinkLine $w={195}>http://www.kamasacheter.com</LinkLine>
            <LinkLine $w={167}>kamasacheter@gmail.com</LinkLine>
            <Strong $mt={15} $w={120}>Numéro de facture</Strong>
            <Line $w={150}>188438 - torgue maxime</Line>
            <Strong $mt={15} $w={110}>Détails de l'achat</Strong>
          </Inset>
          <PriceRow>
            <Line $h={25} $w={156}>dofus serveur Meriana 50</Line>
            <Line $h={25} $w={63}>72,88 EUR</Line>
          </PriceRow>
          <Inset>
            <Line $h={25} $w={54}>M kamas</Line>
            <Line $h={25} $w={104}>Objet n° Meriana</Line>
          </Inset>
          <PriceRow $total>
            <Strong $w={33}>Total</Strong>
            <Strong $w={66}>72,88 EUR</Strong>
          </PriceRow>
        </RightCell>
        <CloseSlot><Cross size={17} color="#5c6266" sw={1.1} /></CloseSlot>
      </Split>
      <IconLink $pl={4} $gap={15}>
        <Printer /><LinkLine $w={167}>Imprimer les informations</LinkLine>
      </IconLink>
      <Rule />
      <Split $height={200}>
        <LeftCell>
          <Strong $w={95}>Besoin d'aide ?</Strong>
          <Line $mt={15} $size={15} $w={142}>En cas de problème,</Line>
          <Line $size={15} $w={172}>contactez le vendeur via</Line>
          <Run>
            <Text $size={15} $w={112}>PayPal avant le </Text>
            <Text $size={15} $weight={700} $w={94}>26 décembre</Text>
          </Run>
          <Run>
            <Text $size={15} $weight={700} $w={39}>2018.</Text>
            <Text $size={15} $w={127}> Vous pouvez être</Text>
          </Run>
          <LinkLine $size={15} $w={192}>éligible à notre Protection</LinkLine>
          <Run>
            <Text $size={15} $weight={700} $color="#0070ba" $w={79}>des Achats</Text>
            <Text $size={15} $weight={700}>.</Text>
          </Run>
        </LeftCell>
        <RightCell>
          <IconLink $mt={21} $pl={8} $gap={13}>
            <Warning /><LinkLine $w={136}>Signaler un problème</LinkLine>
          </IconLink>
        </RightCell>
      </Split>
    </TxBody>
  </MainCard>
);

const PayPalPage = () => (
  <Viewport>
    <Page>
      <Header>
        <PayPalMark width={23} height={27} back="#ffffff" front="#b9d3ec" />
        <NavItem $size={15} $weight={600} $w={48} $active>Accueil</NavItem>
        <NavItem $size={15} $weight={600} $w={53}>Activité</NavItem>
        <NavItem $size={15} $weight={600} $w={69}>Transferts</NavItem>
        <NavItem $size={15} $weight={600} $w={78}>Portefeuille</NavItem>
        <NavItem $size={15} $weight={600} $w={31}>Aide</NavItem>
        <HeaderTools>
          <Bell />
          <Gap $width={24} />
          <Gear />
          <LogOut $size={12.5} $weight={600} $w={91}>DÉCONNEXION</LogOut>
        </HeaderTools>
      </Header>
      <Columns>
        <Sidebar />
        <Transaction />
      </Columns>
    </Page>
    <Scrollbar>
      <Arrow $up />
      <ScrollThumb />
      <Arrow />
    </Scrollbar>
  </Viewport>
);

const DownTick = ({ w = 8, color = "#777", sw = 1.5 }) => (
  <svg width={w} height={w * 0.6} viewBox="0 0 10 6"><path d="m1 .5 4 4.500 4-4.500" fill="none" stroke={color} strokeWidth={sw} /></svg>
);

const Explorer = () => (
  <>
    <TitleBar>
      <QuickAccess>
        <Film s={14} />
        <QuickRule $ml={7} />
        <QuickSlot $ml={12}><CheckDoc /></QuickSlot>
        <QuickSlot $ml={9}><SmallFolder /></QuickSlot>
        <QuickSlot $ml={8}>
          <svg width="8" height="6" viewBox="0 0 8 6"><path d="M0 .5h8" stroke="#111" /><path d="M.5 2.500h7L4 6z" fill="#111" /></svg>
        </QuickSlot>
        <QuickRule $ml={7} />
      </QuickAccess>
      <ContextTab><Text $size={12} $color="#5e3a4b" $w={77}>Outils de vidéo</Text></ContextTab>
      <WindowTitle $size={12} $color="#a0a0a0" $w={35}>Vidéos</WindowTitle>
      <Caption>
        <MinMark $mt={5} $color="#888" />
        <Restore color="#888" />
        <Cross size={10} color="#888" sw={1} />
      </Caption>
    </TitleBar>
    <RibbonTabs>
      <RibbonTab $width={56} $file><Text $size={12} $w={34}>Fichier</Text></RibbonTab>
      <RibbonTab $width={64}><Text $size={12} $w={36}>Accueil</Text></RibbonTab>
      <RibbonTab $width={69}><Text $size={12} $w={39}>Partage</Text></RibbonTab>
      <RibbonTab $width={80}><Text $size={12} $w={49}>Affichage</Text></RibbonTab>
      <RibbonTab $width={92} $context><Text $size={12} $w={37}>Lecture</Text></RibbonTab>
      <RibbonEnd><DownTick color="#888" /><HelpDisc>?</HelpDisc></RibbonEnd>
    </RibbonTabs>
    <AddressRow>
      <AddressNav>
        <BackArrow color="#6d6d6d" sw={2} size={13} />
        <QuickSlot $ml={16}><BackArrow color="#6d6d6d" flip="180" sw={2} size={13} /></QuickSlot>
        <QuickSlot $ml={13}><DownTick w={7} sw={2} color="#8a8a8a" /></QuickSlot>
        <QuickSlot $ml={12}><BackArrow color="#6d6d6d" flip="90" sw={2} size={13} /></QuickSlot>
      </AddressNav>
      <AddressBox>
        <Film s={14} />
        <QuickSlot $ml={8}><Chevron w={4} h={7} color="#666" sw={1.6} /></QuickSlot>
        <Crumb $size={12} $w={32}>Ce PC</Crumb>
        <Chevron w={4} h={7} color="#666" sw={1.6} />
        <Crumb $size={12} $w={35}>Vidéos</Crumb>
        <Spacer />
        <DownTick w={10} sw={2} color="#666" />
        <RefreshCell>
          <svg width="10" height="11" viewBox="0 0 10 11">
            <path d="M8 3A4 4 0 1 1 2 3" fill="none" stroke="#555" strokeWidth="1.600" />
            <path d="M0 .8h4.500v4z" fill="#555" />
          </svg>
        </RefreshCell>
      </AddressBox>
      <SearchBox>
        <Text $size={12} $w={130}>Rechercher dans : Vidéos</Text>
        <svg width="12" height="12" viewBox="0 0 12 12" fill="none" stroke="#666">
          <circle cx="7.500" cy="4.500" r="3.600" strokeWidth="1.500" /><path d="M5 7 .8 11.200" strokeWidth="2" />
        </svg>
      </SearchBox>
    </AddressRow>
    <ExplorerBody>
      <NavPane>
        {NAV.map((n, i) => (
          <NavRow key={i} $child={n.child} $section={n.section} $selected={n.selected}>
            <NavIcon>{n.icon}</NavIcon>
            <NavLabel $size={12} $w={n.w} $clip={n.pin}>{n.label}</NavLabel>
            {n.pin && <PinSlot><Pin /></PinSlot>}
          </NavRow>
        ))}
      </NavPane>
      <FolderTile>
        <BigFolder />
        <Line $size={12} $h={22} $w={47}>Captures</Line>
      </FolderTile>
    </ExplorerBody>
    <StatusBar>
      <Text $size={12} $w={52}>1 élément</Text>
      <StatusRule />
      <Text $size={12} $w={115}>1 élément sélectionné</Text>
      <StatusRule />
      <ViewIcons>
        <ViewButton>
          <svg width="12" height="10" viewBox="0 0 12 10" stroke="#666"><path d="M0 1.500h2M4 1.500h8M0 5h2M4 5h8M0 8.500h2M4 8.500h8" /></svg>
        </ViewButton>
        <ViewButton $on>
          <svg width="12" height="10" viewBox="0 0 12 10" fill="none" stroke="#555"><path d="M.5.500h11v9H.5z" /></svg>
        </ViewButton>
      </ViewIcons>
    </StatusBar>
  </>
);

export default function App() {
  return (
    <>
      <Global />
      <Desktop>
        <LeftScreen>
          <Browser />
          <PayPalPage />
          <TaskbarBox $bg="linear-gradient(90deg, #101712 0%, #15200f 14%, #14110f 22%, #17140f 38%, #101013 50%, #191b0e 75%, #1b1c10 92%, #101010 100%)">
            <TaskButton><FaWindows size={17} /></TaskButton>
            <TaskButton><Ring s={17} sw={3} color="#fff" /></TaskButton>
            <TaskButton><TaskView /></TaskButton>
            <Apps ml={3} />
            <Spacer />
            <ClockText mr={6} />
          </TaskbarBox>
        </LeftScreen>
        <RightScreen>
          <Explorer />
          <TaskbarBox $line $bg="#070a10">
            <TaskButton><FaWindows size={17} /></TaskButton>
            <TaskSearch>
              <Ring s={21} sw={3} color="#111" />
              <SearchHint $size={15} $w={163}>Taper ici pour rechercher</SearchHint>
              <svg width="10" height="17" viewBox="0 0 10 17" fill="none" stroke="#333" strokeWidth="1.200">
                <path d="M2.500 1h5v10h-5zM.6 8v5.400h8.800V8M5 13.400V16M2.500 16.400h5" />
              </svg>
            </TaskSearch>
            <TaskButton><TaskView /></TaskButton>
            <Apps ml={3} />
            <Tray>
              <svg width="16" height="14" viewBox="0 0 16 14" fill="none" stroke="#fff">
                <circle cx="6" cy="4" r="2.500" /><path d="M1 13c0-6 10-6 10 0M10.500 5a2 2 0 1 0 0-3.500M12 7.500c2 .5 3 2 3 4" />
              </svg>
              <Gap $width={0} />
              <svg width="10" height="6" viewBox="0 0 10 6"><path d="m1 5.500 4-4.500 4 4.500" fill="none" stroke="#fff" /></svg>
              <svg width="14" height="12" viewBox="0 0 14 12" fill="none" stroke="#fff"><path d="M3 1.500h10.500v7H3zM6 11h5M.5 4v7H3" /></svg>
              <ClockText mr={7} />
              <svg width="15" height="15" viewBox="0 0 15 15"><path d="M.5.500h14v10.500H11v3.500L7.500 11h-7zM3 3.500h9M3 5.700h9M3 8h6" fill="none" stroke="#fff" /></svg>
            </Tray>
          </TaskbarBox>
        </RightScreen>
      </Desktop>
    </>
  );
}
